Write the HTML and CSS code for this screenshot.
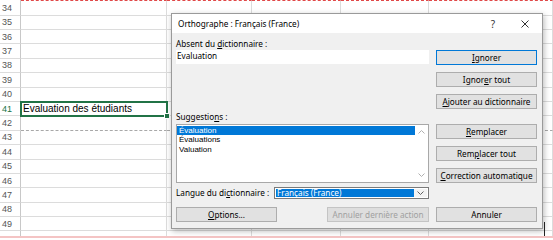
FILE: index.html
```html
<!DOCTYPE html>
<html lang="fr">
<head>
<meta charset="utf-8">
<title>Orthographe</title>
<link rel="stylesheet" href="styles.css">
</head>
<body>
<div class="sheet">
  <div class="rh first">34</div><div class="c top"></div><div class="c top"></div><div class="c top"></div><div class="c top"></div><div class="c top"></div>
  <div class="rh">35</div><div class="c"></div><div class="c"></div><div class="c"></div><div class="c"></div><div class="c"></div>
  <div class="rh">36</div><div class="c"></div><div class="c"></div><div class="c"></div><div class="c"></div><div class="c"></div>
  <div class="rh">37</div><div class="c"></div><div class="c"></div><div class="c"></div><div class="c"></div><div class="c"></div>
  <div class="rh">38</div><div class="c"></div><div class="c"></div><div class="c"></div><div class="c"></div><div class="c"></div>
  <div class="rh">39</div><div class="c"></div><div class="c"></div><div class="c"></div><div class="c"></div><div class="c"></div>
  <div class="rh">40</div><div class="c"></div><div class="c"></div><div class="c"></div><div class="c"></div><div class="c"></div>
  <div class="rh active">41</div><div class="c sel">Evaluation des étudiants</div><div class="c"></div><div class="c"></div><div class="c"></div><div class="c"></div>
  <div class="rh">42</div><div class="c pb"></div><div class="c pb"></div><div class="c pb"></div><div class="c pb"></div><div class="c pb"></div>
  <div class="rh">43</div><div class="c"></div><div class="c"></div><div class="c"></div><div class="c"></div><div class="c"></div>
  <div class="rh">44</div><div class="c"></div><div class="c"></div><div class="c"></div><div class="c"></div><div class="c"></div>
  <div class="rh">45</div><div class="c"></div><div class="c"></div><div class="c"></div><div class="c"></div><div class="c"></div>
  <div class="rh">46</div><div class="c"></div><div class="c"></div><div class="c"></div><div class="c"></div><div class="c"></div>
  <div class="rh">47</div><div class="c"></div><div class="c"></div><div class="c"></div><div class="c"></div><div class="c"></div>
  <div class="rh">48</div><div class="c"></div><div class="c"></div><div class="c"></div><div class="c"></div><div class="c"></div>
  <div class="rh">49</div><div class="c"></div><div class="c"></div><div class="c"></div><div class="c"></div><div class="c"></div>
  <div class="rh part"></div><div class="c part"></div><div class="c part"></div><div class="c part"></div><div class="c part"></div><div class="c part"></div>
  <div class="pinkline"></div>
</div>

<div class="dialog">
  <div class="titlebar">
    <span class="title">Orthographe : Français (France)</span>
    <span class="help">?</span>
    <span class="close"><svg width="8" height="8" viewBox="0 0 8 8"><path d="M0.5 0.5 L7.5 7.5 M7.5 0.5 L0.5 7.5" stroke="#333" stroke-width="1" fill="none"/></svg></span>
  </div>
  <div class="body">
    <div class="left">
      <div class="label l-absent">Absent du <u>d</u>ictionnaire :</div>
      <div class="field">Evaluation</div>
      <div class="label l-sugg">Suggestio<u>n</u>s :</div>
      <div class="list">
        <div class="items">
          <div class="item selected">Évaluation</div>
          <div class="item">Évaluations</div>
          <div class="item">Valuation</div>
        </div>
        <div class="scroll">
          <svg width="7" height="4" viewBox="0 0 7 4"><path d="M0.5 3.5 L3.5 0.5 L6.5 3.5" stroke="#b0b0b0" fill="none"/></svg>
          <svg width="7" height="4" viewBox="0 0 7 4"><path d="M0.5 0.5 L3.5 3.5 L6.5 0.5" stroke="#b0b0b0" fill="none"/></svg>
        </div>
      </div>
      <div class="lang">
        <span class="label lang-label">Langue du di<u>c</u>tionnaire :</span>
        <div class="combo">
          <span class="combo-val">Français (France)</span>
          <span class="combo-btn"><svg width="7" height="4" viewBox="0 0 7 4"><path d="M0.5 0.5 L3.5 3.5 L6.5 0.5" stroke="#606060" fill="none"/></svg></span>
        </div>
      </div>
      <div class="bottom">
        <div class="btn w101"><u>O</u>ptions...</div>
        <div class="btn disabled">Annuler dernière action</div>
      </div>
    </div>
    <div class="right">
      <div class="btn default"><u>I</u>gnorer</div>
      <div class="btn">Ignor<u>e</u>r tout</div>
      <div class="btn"><u>A</u>jouter au dictionnaire</div>
      <div class="btn gap1"><u>R</u>emplacer</div>
      <div class="btn">Rem<u>p</u>lacer tout</div>
      <div class="btn"><u>C</u>orrection automatique</div>
      <div class="btn gap2">Annuler</div>
    </div>
  </div>
</div>
<div class="cursor-mark"></div>
</body>
</html>
```

FILE: styles.css
```css
html, body {
  margin: 0;
  padding: 0;
}
body {
  width: 553px;
  height: 240px;
  overflow: hidden;
  position: relative;
  background: #fff;
}

/* ---------- spreadsheet ---------- */
.sheet {
  display: grid;
  grid-template-columns: 21px 146px 85px 89px 88px 124px;
  grid-template-rows: 15.6px repeat(15, 14.4px) 4.4px 2px 2px;
  font-family: "Liberation Sans", Arial, sans-serif;
}
.rh {
  box-sizing: border-box;
  border-right: 1px solid #c8c8c8;
  border-bottom: 1px solid #dcdcdc;
  font-size: 9px;
  color: #555;
  padding-left: 2px;
  display: flex;
  align-items: center;
}
.rh.first {
  padding-top: 1px;
}
.rh.active {
  color: #217346;
}
.c {
  box-sizing: border-box;
  border-right: 1px solid #dcdcdc;
  border-bottom: 1px solid #dcdcdc;
  font-size: 10px;
  color: #000;
  padding-left: 2px;
  display: flex;
  align-items: center;
  white-space: nowrap;
}
.c.top {
  border-top: 1px dashed #e04848;
}
.c.pb {
  border-bottom: 1px dashed #a8a8a8;
}
.part {
  border-bottom: none;
}
.c.sel {
  position: relative;
  outline: 2px solid #217346;
  outline-offset: -1px;
  z-index: 1;
}
.c.sel::after {
  content: "";
  position: absolute;
  right: -4px;
  bottom: -4px;
  width: 4px;
  height: 4px;
  background: #217346;
  border: 1px solid #fff;
}
.pinkline {
  grid-column: 1 / -1;
  background: #f4c4c4;
}
.cursor-mark {
  position: absolute;
  left: 544px;
  top: 222px;
  width: 1px;
  height: 14px;
  background: #222;
  z-index: 6;
}

/* ---------- dialog ---------- */
.dialog {
  position: absolute;
  left: 171px;
  top: 13px;
  width: 372px;
  height: 216px;
  box-sizing: border-box;
  border: 1px solid #9a9a9a;
  background: #f0f0f0;
  box-shadow: 1px 2px 6px rgba(0, 0, 0, 0.28);
  font-family: "Noto Sans", "Liberation Sans", sans-serif;
  font-size: 8.2px;
  color: #000;
  display: flex;
  flex-direction: column;
  z-index: 5;
}
.titlebar {
  height: 19px;
  flex: none;
  background: #fff;
  display: flex;
  align-items: center;
  padding: 0 7px 0 6px;
}
.title {
  flex: 1;
  white-space: nowrap;
}
.help {
  width: 20px;
  text-align: center;
  font-size: 10px;
  color: #333;
  margin-right: 12px;
}
.close {
  width: 20px;
  display: flex;
  justify-content: center;
  align-items: center;
}
.body {
  flex: 1;
  display: flex;
  gap: 7px;
  padding: 0 5px 0 4px;
}
.left {
  width: 253px;
  display: flex;
  flex-direction: column;
}
.right {
  width: 101px;
  display: flex;
  flex-direction: column;
  padding-top: 17px;
  gap: 7px;
}
.right .gap1 {
  margin-top: 8px;
}
.right .gap2 {
  margin-top: 17px;
}
.label {
  height: 12px;
  line-height: 12px;
  white-space: nowrap;
}
.l-absent {
  margin-top: 5px;
}
.field {
  height: 14px;
  line-height: 12px;
  background: #fff;
  padding-left: 1px;
}
.l-sugg {
  margin-top: 47px;
}
.list {
  margin-top: 1px;
  height: 59px;
  box-sizing: border-box;
  border: 1px solid #a8a8a8;
  background: #fff;
  display: flex;
}
.items {
  flex: 1;
  padding-top: 1px;
}
.item {
  height: 9.3px;
  line-height: 9.3px;
  padding-left: 2px;
  white-space: nowrap;
  font-family: "Liberation Sans", Arial, sans-serif;
  font-size: 8px;
}
.item.selected {
  background: #0078d7;
  color: #fff;
}
.scroll {
  width: 13px;
  display: flex;
  flex-direction: column;
  justify-content: space-between;
  align-items: center;
  padding: 5px 0;
}
.lang {
  margin-top: 4px;
  height: 12px;
  display: flex;
  align-items: center;
}
.lang-label {
  width: 98px;
}
.combo {
  width: 155px;
  height: 12px;
  box-sizing: border-box;
  border: 1px solid #7a7a7a;
  background: #fff;
  padding: 1px;
  display: flex;
}
.combo-val {
  flex: 1;
  background: #0078d7;
  color: #fff;
  line-height: 8px;
  padding-left: 1px;
  white-space: nowrap;
}
.combo-btn {
  width: 13px;
  display: flex;
  align-items: center;
  justify-content: center;
  background: #f3f3f3;
}
.bottom {
  margin-top: 8px;
  display: flex;
  justify-content: space-between;
}
.btn {
  height: 15px;
  box-sizing: border-box;
  border: 1px solid #adadad;
  background: #e1e1e1;
  display: flex;
  align-items: center;
  justify-content: center;
  white-space: nowrap;
}
.btn.default {
  border-color: #0078d7;
}
.btn.w101 {
  width: 101px;
}
.btn.disabled {
  width: 102px;
  color: #a0a0a0;
  border-color: #c4c4c4;
  background: #dedede;
}
```
